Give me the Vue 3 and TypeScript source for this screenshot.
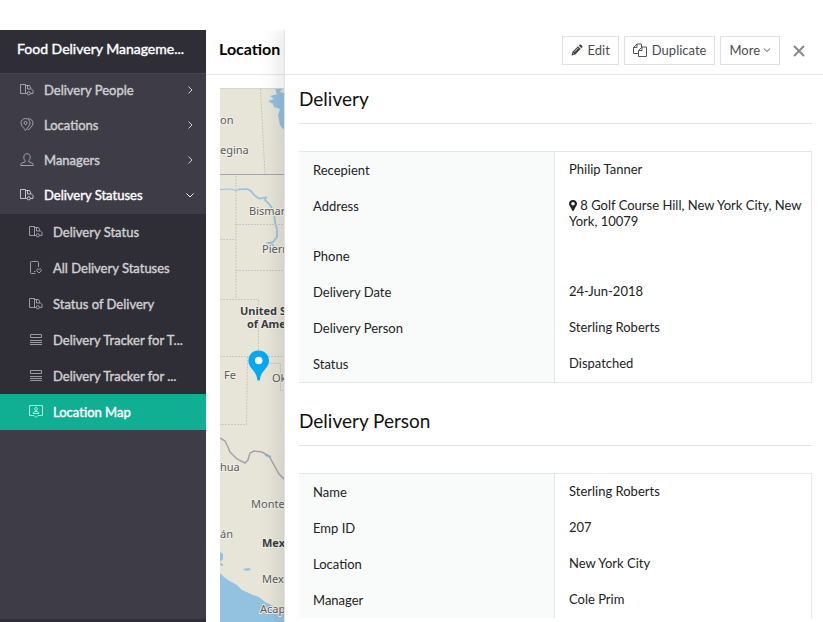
<script setup lang="ts">
import { ref } from 'vue'

type IconName = 'truck' | 'pins' | 'person' | 'device' | 'rows' | 'mapcard'

interface NavItem {
  label: string
  icon: IconName
}

interface Field {
  label: string
  value: string
  pin?: boolean
}

interface Section {
  title: string
  fields: Field[]
}

const icons: Record<IconName, string[]> = {
  truck: [
    'M7 10.5H5.5V1.5H.5V10.5H5.5',
    'M5.5 2.5H9.5L11 5.5L13 7.5V10.5H10.5',
    'M7.5 2.5V6H11',
    'M7.2 10.3A1.6 1.6 0 1 0 10.4 10.3A1.6 1.6 0 1 0 7.2 10.3',
  ],
  pins: [
    'M5.5 12.5C3.5 9.5 1 7.8 1 5A4.5 4.5 0 0 1 10 5C10 7.8 7.5 9.5 5.5 12.5Z',
    'M4 5A1.5 1.5 0 1 0 7 5A1.5 1.5 0 1 0 4 5',
    'M8 .8A4.4 4.4 0 0 1 13 5C13 8 10.3 9.5 8.6 12L7.5 10.7',
  ],
  person: [
    'M7 .7C4.9 .7 3.8 2.1 3.8 4.2C3.8 6 4.6 7.1 5.2 7.8V8.8L1.5 10.3C1 10.6 .8 11.5 .8 12.5H13.2C13.2 11.5 13 10.6 12.5 10.3L8.8 8.8V7.8C9.4 7.1 10.2 6 10.2 4.2C10.2 2.1 9.1 .7 7 .7Z',
  ],
  device: [
    'M6.5 12.5H2.5Q1.5 12.5 1.5 11.5V1.5Q1.5 .5 2.5 .5H8.5Q9.5 .5 9.5 1.5V6',
    'M5 10.5H6.5',
    'M10 12L7.8 9.8C7 8.5 8.8 7.2 10 8.6C11.2 7.2 13 8.5 12.2 9.8Z',
  ],
  rows: ['M1.5 1.5H12.5V4.5H1.5ZM1 7.5H13M1 9.5H13M1 11.5H13'],
  mapcard: [
    'M.5 .5H13.5V10.5H9L7 12.5L5 10.5H.5Z',
    'M5.7 4A1.3 1.5 0 1 0 8.3 4A1.3 1.5 0 1 0 5.7 4M4.2 8.5V7.5L6 6.5H8L9.8 7.5V8.5Z',
  ],
}

const menu: NavItem[] = [
  { label: 'Delivery People', icon: 'truck' },
  { label: 'Locations', icon: 'pins' },
  { label: 'Managers', icon: 'person' },
  { label: 'Delivery Statuses', icon: 'truck' },
]

const submenu: NavItem[] = [
  { label: 'Delivery Status', icon: 'truck' },
  { label: 'All Delivery Statuses', icon: 'device' },
  { label: 'Status of Delivery', icon: 'truck' },
  { label: 'Delivery Tracker for T...', icon: 'rows' },
  { label: 'Delivery Tracker for ...', icon: 'rows' },
  { label: 'Location Map', icon: 'mapcard' },
]

const openMenu = ref('Delivery Statuses')
const activePage = ref('Location Map')
const panelOpen = ref(true)

const sections: Section[] = [
  {
    title: 'Delivery',
    fields: [
      { label: 'Recepient', value: 'Philip Tanner' },
      { label: 'Address', value: '8 Golf Course Hill, New York City, New York, 10079', pin: true },
      { label: 'Phone', value: '' },
      { label: 'Delivery Date', value: '24-Jun-2018' },
      { label: 'Delivery Person', value: 'Sterling Roberts' },
      { label: 'Status', value: 'Dispatched' },
    ],
  },
  {
    title: 'Delivery Person',
    fields: [
      { label: 'Name', value: 'Sterling Roberts' },
      { label: 'Emp ID', value: '207' },
      { label: 'Location', value: 'New York City' },
      { label: 'Manager', value: 'Cole Prim' },
    ],
  },
]
</script>

<template>
  <div class="app">
    <aside class="sidebar">
      <h1 class="app-name">Food Delivery Manageme...</h1>
      <nav class="nav">
        <button
          v-for="item in menu"
          :key="item.label"
          type="button"
          class="nav-item"
          :class="{ open: openMenu === item.label }"
          @click="openMenu = item.label"
        >
          <svg class="nav-icon" viewBox="0 0 14 13" aria-hidden="true">
            <path v-for="d in icons[item.icon]" :key="d" :d="d" />
          </svg>
          <span class="nav-label">{{ item.label }}</span>
          <svg class="chevron" viewBox="0 0 8 8" aria-hidden="true">
            <path :d="openMenu === item.label ? 'M.5 2.5L4 6L7.5 2.5' : 'M2.5 .5L6 4L2.5 7.5'" />
          </svg>
        </button>
        <div class="subnav">
          <a
            v-for="item in submenu"
            :key="item.label"
            href="#"
            class="sub-item"
            :class="{ active: activePage === item.label }"
            @click.prevent="activePage = item.label"
          >
            <svg class="nav-icon" viewBox="0 0 14 13" aria-hidden="true">
              <path v-for="d in icons[item.icon]" :key="d" :d="d" />
            </svg>
            <span>{{ item.label }}</span>
          </a>
        </div>
      </nav>
      <div class="sidebar-foot"></div>
    </aside>

    <main class="main">
      <header class="page-head">
        <h2>Location</h2>
      </header>
      <div class="map">
        <svg class="map-svg" width="603" height="534" viewBox="220 88 603 534" role="img" aria-label="Map">
          <rect x="220" y="88" width="603" height="534" fill="#e7e5d8" />
          <path d="M220 88.500H823" stroke="#d5d5d5" />
          <g fill="#93c1e0">
            <path d="M275 89H282L280 92L284 93H290V130L283 129L280 125L278 115L280 109L274 107L273 104L268 101L274 99L270 96L277 94Z" />
            <path d="M220 552L223 554V559L220 562ZM220 563L223 564V566L220 565Z" />
            <path d="M243 569L249 568L251 570L246 571Z" />
            <path d="M220 573L224 577L228 580L237 585L242 590L253 595L259 597L265 602L275 607L290 611V622H220Z" />
          </g>
          <g fill="none" stroke="#93c1e0">
            <path d="M220 189.500L230 189L236 190.500L240 189" stroke-width="1" />
            <path d="M238 189.500L247 189L251 191L254 195L259 198.500L266 197.500L265 200L269 204L272 208L274 213L275 222L277 229L277 237L273 242L268 243L273 245L276 250L281 252" stroke-width="1.700" />
            <path d="M265 455L271 457" stroke-width="2" />
          </g>
          <path d="M220 174.500H290" fill="none" stroke="#aaa0b1" stroke-width="1" />
          <path d="M220 438L225 441L228 447L230 452L237 459L245 463L248 460L250 453L254 451L262 452L269 456L274 465L279 474L285 480" fill="none" stroke="#aaa0ae" stroke-width="1.500" />
          <g fill="none" stroke="#cbc5c5" stroke-width="1" stroke-dasharray="2 1">
            <path d="M260.500 89L265 174" />
            <path d="M236 176V299.500M236 224.500H285M220 239.500H236M236 270.500H285M220 299.500H258.500V356.500M220 356.500H285" />
            <path d="M247.500 357L246.500 424.500H220M258 357V363.500H280.500V390.500H285" />
          </g>
          <g class="city">
            <text x="220" y="124">on</text>
            <text x="220" y="154">egina</text>
            <text x="249" y="215">Bismar</text>
            <text x="262" y="253">Pierr</text>
            <text x="224" y="379">Fe</text>
            <text x="272" y="382">Ok</text>
            <text x="220" y="471">hua</text>
            <text x="251" y="508">Monte</text>
            <text x="220" y="538">án</text>
            <text x="262" y="583">Mex</text>
            <text x="260" y="613">Acap</text>
          </g>
          <g class="country">
            <text x="240" y="315">United S</text>
            <text x="247" y="328">of Ame</text>
            <text x="262" y="547">Mex</text>
          </g>
          <path d="M258.500 350.500C252.500 350.500 248.500 355 248.500 361C248.500 368.500 256.500 370 257.500 380.500H259.800C260.500 370 269 368.500 269 361C269 355 264.800 350.500 258.500 350.500Z" fill="#03a9f4" />
          <circle cx="258.700" cy="360.500" r="3.800" fill="#fff" />
        </svg>
      </div>

      <section v-if="panelOpen" class="panel">
        <header class="toolbar">
          <button type="button" class="btn">
            <svg width="12" height="12" viewBox="0 0 12 12" aria-hidden="true">
              <path d="M.5 11.500L1.300 8L7 2.300L9.700 5L4 10.700Z" fill="#444" />
              <path d="M7.700 1.600L8.800 .6Q9.300 .2 9.900 .7L11.300 2.100Q11.800 2.700 11.300 3.300L10.400 4.300Z" fill="#444" />
              <path d="M1.800 9L3 10.200M3.500 7.800L7.200 4" stroke="#fff" stroke-width=".7" />
            </svg>
            <span>Edit</span>
          </button>
          <button type="button" class="btn">
            <svg width="14" height="14" viewBox="0 0 14 14" fill="none" stroke="#555" aria-hidden="true">
              <path d="M5 10.500H.5V4.500L4 1H8.500V4" />
              <path d="M4 1V4.500H.5" />
              <path d="M5.500 7.500L9 4H13.500V13.500H5.500Z" />
              <path d="M9 4V7.500H5.500" />
            </svg>
            <span>Duplicate</span>
          </button>
          <button type="button" class="btn more">
            <span>More</span>
            <svg width="8" height="8" viewBox="0 0 8 8" fill="none" stroke="#555" aria-hidden="true">
              <path d="M.8 2.500L4 5.500L7.200 2.500" />
            </svg>
          </button>
          <button type="button" class="close" aria-label="Close" @click="panelOpen = false">
            <svg width="12" height="12" viewBox="0 0 12 12" fill="none" stroke="#888" stroke-width="2" aria-hidden="true">
              <path d="M1 1L11 11M11 1L1 11" />
            </svg>
          </button>
        </header>
        <div class="panel-body">
          <section v-for="section in sections" :key="section.title" class="detail">
            <h3>{{ section.title }}</h3>
            <table>
              <tbody>
                <tr v-for="field in section.fields" :key="field.label">
                  <th scope="row">{{ field.label }}</th>
                  <td>
                    <svg v-if="field.pin" class="pin" width="8" height="11" viewBox="0 0 8 11" aria-hidden="true">
                      <path d="M4 0C1.700 0 0 1.700 0 3.800C0 6 2 7 3 10.300Q4 11.500 5 10.300C6 7 8 6 8 3.800C8 1.700 6.300 0 4 0ZM4 2A1.800 1.800 0 1 1 4 5.600A1.800 1.800 0 1 1 4 2Z" fill="#222" fill-rule="evenodd" />
                    </svg>
                    {{ field.value }}
                  </td>
                </tr>
              </tbody>
            </table>
          </section>
        </div>
      </section>
    </main>
  </div>
</template>

<style>
body {
  background: #fff;
}
</style>

<style scoped>
.app {
  box-sizing: border-box;
  display: flex;
  height: 100vh;
  padding-top: 30px;
  overflow: hidden;
  font-family: Lato, "Liberation Sans", sans-serif;
  font-size: 13px;
  line-height: 16px;
  color: #222;
}

button {
  font: inherit;
  cursor: pointer;
}

.sidebar {
  display: flex;
  flex-direction: column;
  flex: 0 0 206px;
  min-width: 0;
  background: #3e3d47;
  color: #cfcfd2;
  -webkit-text-stroke: 0.4px currentColor;
}

.app-name {
  margin: 0;
  padding: 7px 16px 12px 17px;
  border-bottom: 1px solid #484751;
  background: #2f2e37;
  color: #fff;
  font-size: 14px;
  line-height: 24px;
  font-weight: 400;
  white-space: nowrap;
}

.nav {
  display: flex;
  flex-direction: column;
  flex: 1;
}

.nav-item,
.sub-item {
  display: flex;
  align-items: center;
  gap: 10px;
  color: inherit;
  white-space: nowrap;
}

.nav-item {
  height: 35px;
  padding: 0 12px 3px 20px;
  border: 0;
  background: none;
  text-align: left;
}

.nav-item.open {
  color: #fff;
}

.nav-label {
  flex: 1;
}

.nav-icon {
  flex: none;
  width: 14px;
  height: 13px;
  margin-bottom: 2px;
  fill: none;
  stroke: currentColor;
  stroke-width: 0.8;
  opacity: 0.85;
}

.chevron {
  width: 8px;
  height: 8px;
  fill: none;
  stroke: currentColor;
}

.subnav {
  background: #2f2e37;
}

.sub-item {
  height: 36px;
  padding: 0 12px 0 29px;
  text-decoration: none;
}

.sub-item.active {
  background: #10af94;
  color: #fff;
}

.sidebar-foot {
  height: 3px;
  background: #2f2e37;
}

.main {
  position: relative;
  display: flex;
  flex-direction: column;
  flex: 1;
  min-width: 0;
}

.page-head {
  padding: 7px 13px 13px;
  border-bottom: 1px solid #e6e6e6;
}

.page-head h2 {
  margin: 0;
  color: #000;
  font-size: 16px;
  line-height: 24px;
  font-weight: 700;
}

.map {
  flex: 1;
  min-height: 0;
  margin: 13px 0 0 14px;
  overflow: hidden;
}

.map-svg {
  display: block;
}

.city,
.country {
  font-family: "Noto Sans", sans-serif;
  font-size: 11px;
  fill: #5a5a5a;
  stroke: #f1f0e8;
  stroke-width: 2px;
  stroke-linejoin: round;
  paint-order: stroke;
}

.country {
  font-weight: 700;
  fill: #3b3b3f;
}

.panel {
  position: absolute;
  inset: 0 0 0 78px;
  display: flex;
  flex-direction: column;
  border-left: 1px solid #e2e2e4;
  background: #fff;
  box-shadow: -6px 0 18px rgba(0, 0, 0, 0.1);
  clip-path: inset(0 0 0 -40px);
}

.toolbar {
  display: flex;
  align-items: center;
  justify-content: flex-end;
  gap: 5px;
  padding: 6px 18px 9px 14px;
  border-bottom: 1px solid #e6e6e6;
}

.btn {
  display: flex;
  align-items: center;
  gap: 5px;
  height: 29px;
  padding: 0 8px 2px;
  border: 1px solid #e0e0e0;
  background: #fff;
  color: #4c4c4c;
}

.more {
  gap: 3px;
}

.close {
  display: flex;
  margin-left: 8px;
  padding: 0;
  border: 0;
  background: none;
}

.panel-body {
  flex: 1;
  min-height: 0;
  margin-bottom: 4px;
  padding: 0 11px 0 14px;
  overflow: hidden;
}

.detail {
  margin-bottom: 14px;
}

.detail h3 {
  margin: 0 0 27px;
  padding: 12px 0 12px;
  border-bottom: 1px solid #e2e2e2;
  color: #111;
  font-size: 19px;
  line-height: 24px;
  font-weight: 400;
}

.detail table {
  width: 100%;
  border: 1px solid #e6e8e8;
  border-left: 0;
  border-spacing: 0;
  table-layout: fixed;
}

.detail th,
.detail td {
  box-sizing: border-box;
  height: 36px;
  vertical-align: top;
  font-weight: 400;
  text-align: left;
}

.detail th {
  padding: 10px 14px;
  border-right: 1px solid #e6e8e8;
  background: #f9fbfb;
}

.detail td {
  padding: 9px 8px 9px 14px;
}

.pin {
  vertical-align: -1px;
}
</style>
